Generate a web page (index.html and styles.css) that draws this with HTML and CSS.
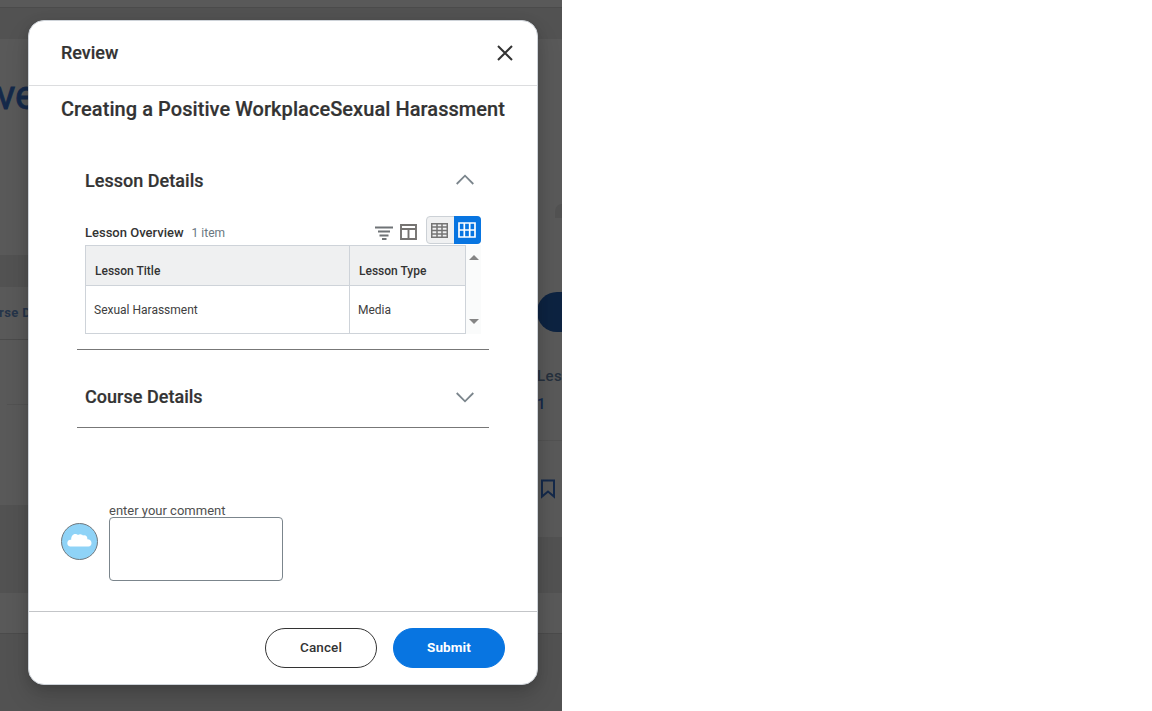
FILE: index.html
```html
<!DOCTYPE html>
<html lang="en">
<head>
<meta charset="utf-8">
<title>Review</title>
<link rel="stylesheet" href="styles.css">
</head>
<body>
<main class="stage">
  <div class="page" aria-hidden="true">
    <div class="topbar"></div>
    <div class="hero"><span class="hero-title">ve</span><span class="hero-curve"></span></div>
    <div class="columns">
      <div class="col-left">
        <div class="tab">rse D</div>
        <div class="row"></div>
      </div>
      <div class="col-right">
        <span class="pill"></span>
        <div class="facts"><p class="fact-label">Les</p><p class="fact-value">1</p></div>
        <div class="save">
          <svg width="16" height="20" viewBox="0 0 16 20"><path d="M2 1.5h12v16l-6-5-6 5z" fill="none" stroke="#14294a" stroke-width="2"/></svg>
        </div>
      </div>
    </div>
    <div class="strip"></div>
  </div>

  <section class="modal" role="dialog" aria-label="Review">
    <header class="modal-head">
      <h1 class="modal-title">Review</h1>
      <svg width="16" height="16" viewBox="0 0 16 16"><path d="M1 1l14 14M15 1L1 15" stroke="#333" stroke-width="2" fill="none"/></svg>
    </header>
    <div class="modal-body">
      <h2 class="course">Creating a Positive WorkplaceSexual Harassment</h2>
      <div class="panel panel-open">
        <div class="panel-head">
          <h3 class="panel-title">Lesson Details</h3>
          <svg class="chevron-up" width="18" height="11" viewBox="0 0 18 11"><path d="M.7 10L9 1.7 17.300 10" fill="none" stroke="#7b858c" stroke-width="1.8"/></svg>
        </div>
        <div class="grid-bar">
          <span class="grid-title">Lesson Overview</span>
          <span class="grid-count">1 item</span>
          <div class="tools">
            <svg class="tool-filter" width="18" height="14" viewBox="0 0 18 14"><path d="M0 1.500h18M3 5.500h12M4.500 9.500h9M7 13h4.500" stroke="#6f7376" stroke-width="1.900"/></svg>
            <svg class="tool-columns" width="17" height="16" viewBox="0 0 17 16"><path d="M1 1h15v14H1zM1 5h15M8.500 5v10" fill="none" stroke="#757371" stroke-width="1.900"/></svg>
            <div class="toggle">
              <span class="toggle-off"><svg width="17" height="15" viewBox="0 0 17 15"><path d="M.75.750h15.500v13.500H.75zM.75 4h15.500M.75 7.500h15.500M.75 11h15.500M6 .75v13.500M11 .75v13.500" fill="none" stroke="#757575" stroke-width="1.500"/></svg></span>
              <span class="toggle-on"><svg width="18" height="16" viewBox="0 0 18 16"><path d="M1 1h16v14H1zM1 8h16M6.300 1v14M11.700 1v14" fill="none" stroke="#fff" stroke-width="1.700"/></svg></span>
            </div>
          </div>
        </div>
        <div class="grid-wrap">
          <table class="grid">
            <thead><tr><th class="c-title">Lesson Title</th><th class="c-type">Lesson Type</th></tr></thead>
            <tbody><tr><td>Sexual Harassment</td><td>Media</td></tr></tbody>
          </table>
          <div class="scroll"><i class="arrow-up"></i><i class="arrow-down"></i></div>
        </div>
      </div>
      <div class="panel panel-closed">
        <div class="panel-head">
          <h3 class="panel-title">Course Details</h3>
          <svg width="18" height="11" viewBox="0 0 18 11"><path d="M.7 1L9 9.300 17.300 1" fill="none" stroke="#7b858c" stroke-width="1.800"/></svg>
        </div>
      </div>
      <div class="comment">
        <svg class="avatar" width="38" height="38" viewBox="0 0 38 38"><circle cx="18.500" cy="18.500" r="18" fill="#8fd3f7" stroke="#70777c"/><path d="M9 23.500a3.400 3.400 0 0 1 .3-6.700h.9c-.1-3.300 1.300-5.800 4.300-5.800 1 0 1.800.4 2.500 1 1-.6 2-.8 3-.5 1 .1 1.600.500 2 1 2.700-.700 4.500.700 4.400 3.800 2.500 0 4.100 1.500 4.100 3.700 0 2-1.200 3.500-3 3.500z" fill="#fff"/></svg>
        <label class="field"><span class="field-label">enter your comment</span><span class="field-box"></span></label>
      </div>
    </div>
    <footer class="modal-foot">
      <button class="btn">Cancel</button>
      <button class="btn btn-primary">Submit</button>
    </footer>
  </section>
</main>
</body>
</html>
```
FILE: styles.css
```css
* { box-sizing: border-box; margin: 0; padding: 0; }
body { width: 1152px; height: 711px; background: #fff; font-family: Roboto, sans-serif; color: #333; overflow: hidden; }
.stage { position: relative; width: 562px; height: 711px; overflow: hidden; background: #525252; }

.page { display: flex; flex-direction: column; height: 711px; }
.topbar { height: 8px; background: #595959; border-bottom: 1px solid #4b4b4b; margin-bottom: 31px; }
.hero { display: flex; justify-content: space-between; height: 216px; background: #595959; overflow: hidden; }
.hero-title { margin: 33px 0 0 -4px; font-size: 40px; line-height: 48px; font-weight: 400; -webkit-text-stroke: .8px #14294a; color: #14294a; }
.hero-curve { width: 7px; height: 14px; margin-top: 165px; background: #525252; border-radius: 7px 0 0 0; }
.columns { display: flex; justify-content: space-between; height: 282px; }
.col-left { width: 300px; height: 218px; margin-top: 32px; background: #595959; }
.tab { height: 53px; padding-top: 17px; border-bottom: 1px solid #4b4b4b; font-size: 13px; line-height: 18px; font-weight: 700; letter-spacing: .4px; color: #253449; text-indent: -1px; }
.row { height: 65px; margin-left: 7px; border-bottom: 1px solid #525252; }
.col-right { width: 25px; height: 282px; background: #595959; padding-top: 37px; overflow: hidden; }
.pill { display: block; width: 112px; height: 40px; border-radius: 20px; background: #0d2341; }
.facts { height: 109px; padding-top: 33px; border-bottom: 1px solid #525252; letter-spacing: .4px; }
.fact-label { font-size: 15px; line-height: 22px; font-weight: 500; color: #25303d; }
.fact-value { font-size: 15px; line-height: 22px; font-weight: 500; margin-top: 6px; color: #14294a; }
.save { padding: 38px 0 0 3px; }
.strip { height: 41px; margin-top: 56px; background: #595959; border-bottom: 1px solid #4b4b4b; }

.modal { position: absolute; left: 28px; top: 20px; width: 510px; height: 665px; display: flex; flex-direction: column; background: #fff; border: 1px solid #ced3d9; border-radius: 16px; box-shadow: 0 12px 24px rgba(0,0,0,.14), 0 3px 12px rgba(0,0,0,.12); }
.modal-head { display: flex; align-items: center; justify-content: space-between; height: 65px; padding: 0 24px 0 32px; border-bottom: 1px solid #dcdddf; }
.modal-title, .course, .panel-title { -webkit-text-stroke: .2px #333; }
.modal-title { font-size: 18px; font-weight: 500; line-height: 24px; }
.modal-body { flex: 1; padding: 9px 32px 0; }
.course { font-size: 20px; line-height: 28px; font-weight: 500; letter-spacing: .06px; white-space: nowrap; }
.panel { width: 412px; margin-left: 16px; padding: 0 8px; border-bottom: 1px solid #777; }
.panel-open { height: 227px; padding-top: 46px; }
.panel-closed { height: 78px; padding-top: 35px; }
.panel-head { display: flex; align-items: center; justify-content: space-between; height: 24px; padding-right: 7px; }
.panel-title { font-size: 18px; line-height: 24px; font-weight: 500; letter-spacing: .03px; }
.chevron-up { margin-bottom: 3px; }
.grid-bar { display: flex; height: 29px; margin-top: 23px; }
.grid-title, .grid-count { padding-top: 8px; line-height: 18px; white-space: nowrap; }
.grid-title { font-size: 13px; font-weight: 500; }
.grid-count { margin-left: 8px; font-size: 12px; color: #697780; }
.tools { display: flex; margin-left: auto; }
.tool-filter { margin-top: 10px; }
.tool-columns { margin: 8px 0 0 7px; }
.toggle { display: flex; width: 55px; height: 28px; margin-left: 9px; border: 1px solid #ccd1d6; border-radius: 4px; background: #f0f1f2; }
.toggle-off, .toggle-on { display: flex; align-items: center; justify-content: center; }
.toggle-off { width: 27px; padding-right: 2px; }
.toggle-on { width: 27px; padding-right: 1px; background: #0875e1; margin: -1px -1px -1px 0; border-radius: 0 4px 4px 0; }
.grid-wrap { display: flex; }
.grid { width: 381px; border-collapse: collapse; table-layout: fixed; font-size: 12px; }
.grid th, .grid td { border: 1px solid #ced3d9; text-align: left; white-space: nowrap; }
.grid th { height: 40px; padding: 11px 9px 0; background: #eff0f1; font-weight: 500; }
.grid td { height: 48px; padding: 0 8px; font-weight: 400; color: #404040; }
.c-title { width: 264px; }
.scroll { display: flex; flex-direction: column; justify-content: space-between; align-items: center; width: 15px; height: 89px; padding: 10px 0; background: #fafbfb; }
.arrow-up, .arrow-down { border: solid transparent; border-width: 0 5px; }
.arrow-up { border-bottom: 5px solid #858585; }
.arrow-down { border-top: 5px solid #858585; }
.comment { display: flex; padding-top: 74px; }
.avatar { margin-top: 21px; }
.field { margin-left: 10px; }
.field-label { display: block; height: 15px; font-size: 13px; line-height: 18px; color: #4f4f4f; }
.field-box { display: block; width: 174px; height: 64px; border: 1px solid #7b858c; border-radius: 4px; }
.modal-foot { display: flex; justify-content: flex-end; gap: 16px; height: 73px; padding: 16px 32px 0 0; border-top: 1px solid #c3c5c8; }
.btn { width: 112px; height: 40px; padding-bottom: 2px; border: 1px solid #333; border-radius: 20px; background: #fff; color: #333; font: 500 13.500px/20px Roboto, sans-serif; letter-spacing: .1px; }
.btn-primary { border-color: #0875e1; background: #0875e1; color: #fff; font-weight: 700; }
```
